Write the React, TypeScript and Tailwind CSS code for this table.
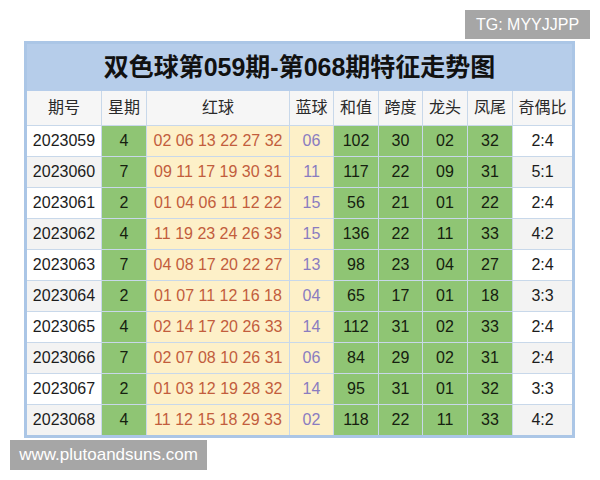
const rows = [
  ["2023059", "4", "02 06 13 22 27 32", "06", "102", "30", "02", "32", "2:4"],
  ["2023060", "7", "09 11 17 19 30 31", "11", "117", "22", "09", "31", "5:1"],
  ["2023061", "2", "01 04 06 11 12 22", "15", "56", "21", "01", "22", "2:4"],
  ["2023062", "4", "11 19 23 24 26 33", "15", "136", "22", "11", "33", "4:2"],
  ["2023063", "7", "04 08 17 20 22 27", "13", "98", "23", "04", "27", "2:4"],
  ["2023064", "2", "01 07 11 12 16 18", "04", "65", "17", "01", "18", "3:3"],
  ["2023065", "4", "02 14 17 20 26 33", "14", "112", "31", "02", "33", "2:4"],
  ["2023066", "7", "02 07 08 10 26 31", "06", "84", "29", "02", "31", "2:4"],
  ["2023067", "2", "01 03 12 19 28 32", "14", "95", "31", "01", "32", "3:3"],
  ["2023068", "4", "11 12 15 18 29 33", "02", "118", "22", "11", "33", "4:2"],
];

const headers = ["期号", "星期", "红球", "蓝球", "和值", "跨度", "龙头", "凤尾", "奇偶比"];

// column colour per index: plain / green / yellow
const cellClass = (col: number, even: boolean) => {
  const plain = even ? "bg-[#f3f3f3] text-[#1c1c1c]" : "bg-white text-[#1c1c1c]";
  if (col === 0 || col === 8) return plain;
  if (col === 2) return "bg-[#fdf0c8] text-[#c25d3d]";
  if (col === 3) return "bg-[#fdf0c8] text-[#8a7cc0]";
  return "bg-[#8fc574] text-[#15200f]";
};

export default function App() {
  return (
    <div
      className="relative w-[600px] h-[480px] bg-white overflow-hidden"
      style={{ fontFamily: '"Liberation Sans", "Noto Sans CJK SC", sans-serif' }}
    >
      {/* chart table */}
      <div className="ml-[24px] mt-[41px] w-[551px] border-[3px] border-[#abc6e6] bg-[#b6cdea]">
        <div className="h-[47px] flex items-center justify-center text-[25px] font-bold text-[#111]">
          双色球第059期-第068期特征走势图
        </div>
        <div className="grid grid-cols-[74px_44px_142px_43px_44px_43px_44px_44px_59px] grid-rows-[34px_repeat(10,30px)] gap-px bg-[#c8d8ea]">
          {headers.map((h) => (
            <div
              key={h}
              className="bg-[#f6f6f6] flex items-center justify-center text-[16px] text-[#2a2a2a]"
            >
              {h}
            </div>
          ))}
          {rows.map((r, i) =>
            r.map((v, c) => (
              <div
                key={i + "-" + c}
                className={"flex items-center justify-center text-[16px] " + cellClass(c, i % 2 === 1)}
              >
                {v}
              </div>
            ))
          )}
        </div>
      </div>

      {/* watermarks */}
      <div className="absolute left-[465px] top-[10px] w-[125px] h-[29px] bg-[#a6a6a6] flex items-center justify-center text-white text-[16px]">
        TG: MYYJJPP
      </div>
      <div className="absolute left-[10px] top-[440px] w-[197px] h-[30px] bg-[#a6a6a6] flex items-center justify-center text-white text-[17px]">
        www.plutoandsuns.com
      </div>
    </div>
  );
}
